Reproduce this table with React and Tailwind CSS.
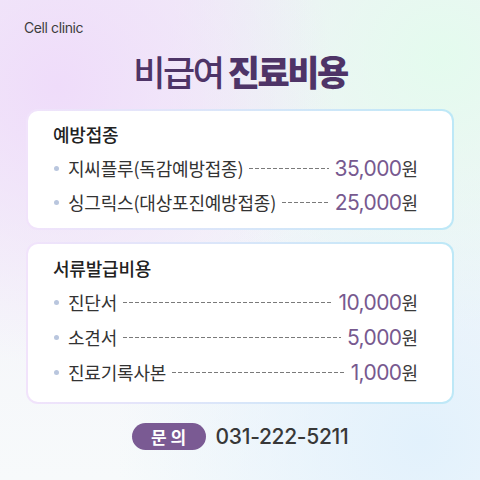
const vaccines = [
  { name: '지씨플루(독감예방접종)', price: '35,000' },
  { name: '싱그릭스(대상포진예방접종)', price: '25,000' },
]

const documents = [
  { name: '진단서', price: '10,000' },
  { name: '소견서', price: '5,000' },
  { name: '진료기록사본', price: '1,000' },
]

function PriceRow({ name, price }) {
  return (
    <div className="flex items-center h-[34px]">
      <span className="w-[5px] h-[5px] rounded-full bg-[#b9c6de] ml-[26px] mr-[9px] shrink-0" />
      <span className="text-[18px] text-[#333] tracking-[-0.2px] whitespace-nowrap">{name}</span>
      <span className="flex-1 mx-[6px] h-px bg-[repeating-linear-gradient(90deg,#7a7a7a_0px,#7a7a7a_4px,transparent_4px,transparent_6px)]" />
      <span className="flex items-baseline">
        <span className="font-['Inter',sans-serif] text-[21px] text-[#77598f] tracking-[-0.6px] leading-none">{price}</span>
        <span className="text-[18px] text-[#3a3a3a] leading-none">원</span>
      </span>
    </div>
  )
}

function PriceCard({ title, items, className }) {
  return (
    <div className="rounded-[12px] p-[2px] bg-gradient-to-r from-[#f1e3fb] to-[#bde8f7]">
      <div className={`rounded-[10px] bg-white pr-[34px] ${className}`}>
        <h2 className="pl-[25px] text-[18px] leading-[24px] font-medium text-[#222] tracking-[-0.2px] mb-[5px]">{title}</h2>
        {items.map((item) => (
          <PriceRow key={item.name} {...item} />
        ))}
      </div>
    </div>
  )
}

export default function App() {
  return (
    <div className="w-[480px] h-[480px] overflow-hidden font-['Noto_Sans_CJK_KR','Noto_Sans',sans-serif] bg-[radial-gradient(circle_at_12%_18%,#efdcfa_0%,transparent_48%),radial-gradient(circle_at_92%_12%,#e4fbee_0%,transparent_45%),radial-gradient(circle_at_88%_92%,#e2f1fc_0%,transparent_50%),linear-gradient(180deg,#f2eff8,#f7fafb)]">
      <div className="pt-[19px] pl-[24px] text-[14px] leading-[18px] text-[#3d3d3d] font-['Inter',sans-serif] tracking-[-0.4px]">
        Cell clinic
      </div>

      <h1 className="mt-[14px] text-center text-[35px] leading-[40px] text-[#4e3467] tracking-[-2.5px]">
        <span className="font-medium">비급여 </span>
        <span className="font-black">진료비용</span>
      </h1>

      <div className="mt-[18px] px-[26px] flex flex-col gap-[12px]">
        <PriceCard title="예방접종" items={vaccines} className="pt-[11px] pb-[9px]" />
        <PriceCard title="서류발급비용" items={documents} className="pt-[12px] pb-[12px] [&>div]:h-[35px]" />
      </div>

      <div className="mt-[17px] flex items-center justify-center gap-[10px]">
        <span className="w-[74px] h-[27px] rounded-full bg-[#7a5a93] text-white text-[17px] font-bold tracking-[4px] flex items-center justify-center pl-[4px]">
          문의
        </span>
        <span className="font-['Inter',sans-serif] text-[21px] font-medium text-[#383838] tracking-[-0.3px]">
          031-222-5211
        </span>
      </div>
    </div>
  )
}
